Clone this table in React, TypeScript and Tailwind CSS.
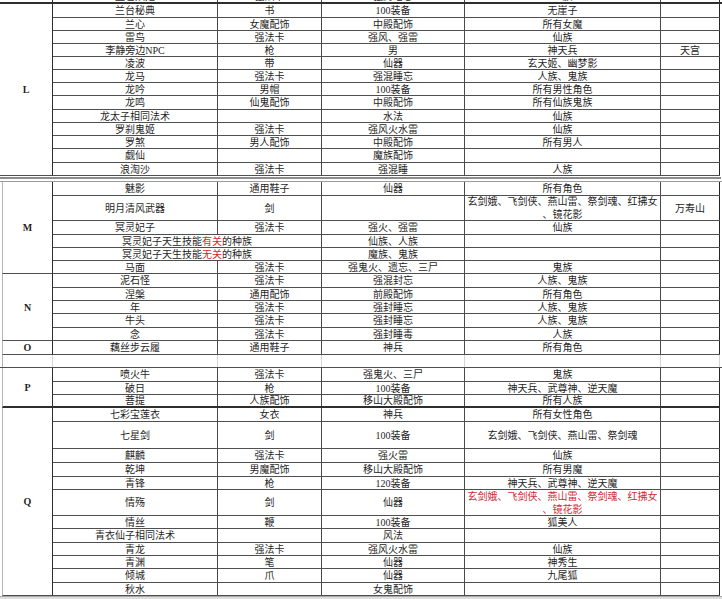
import React from 'react';

type Row = {
  h: number;
  c: React.ReactNode[];
  span?: boolean;
};

const HEIGHT: Record<number, string> = {
  12: 'h-[12px]',
  13: 'h-[13px]',
  14: 'h-[14px]',
  15: 'h-[15px]',
  25: 'h-[25px]',
  26: 'h-[26px]',
  27: 'h-[27px]',
};

const COLS = ['w-[165px]', 'w-[104px]', 'w-[143px]', 'w-[196px]', 'w-[59px]'];
const COLS_SPAN = ['w-[269px]', 'w-[143px]', 'w-[196px]', 'w-[59px]'];

const Red = ({ children }: { children: React.ReactNode }) => (
  <span className="text-[#d8262a]">{children}</span>
);

const TwoLines = ({ red }: { red?: boolean }) => (
  <span className={red ? 'text-[#d22a36]' : ''}>
    玄剑娥、飞剑侠、燕山雷、祭剑魂、红拂女
    <br />
    、镜花影
  </span>
);

const L_ROWS: Row[] = [
  { h: 14, c: ['兰台秘典', '书', '100装备', '无崖子', ''] },
  { h: 13, c: ['兰心', '女魔配饰', '中殿配饰', '所有女魔', ''] },
  { h: 13, c: ['雷鸟', '强法卡', '强风、强雷', '仙族', ''] },
  { h: 13, c: ['李静旁边NPC', '枪', '男', '神天兵', '天宫'] },
  { h: 13, c: ['凌波', '带', '仙器', '玄天姬、幽梦影', ''] },
  { h: 13, c: ['龙马', '强法卡', '强混睡忘', '人族、鬼族', ''] },
  { h: 13, c: ['龙吟', '男帽', '100装备', '所有男性角色', ''] },
  { h: 14, c: ['龙鸣', '仙鬼配饰', '中殿配饰', '所有仙族鬼族', ''] },
  { h: 13, c: ['龙太子相同法术', '', '水法', '仙族', ''] },
  { h: 13, c: ['罗刹鬼姬', '强法卡', '强风火水雷', '仙族', ''] },
  { h: 13, c: ['罗煞', '男人配饰', '中殿配饰', '所有男人', ''] },
  { h: 14, c: ['觑仙', '', '魔族配饰', '', ''] },
  { h: 13, c: ['浪淘沙', '强法卡', '强混睡', '人族', ''] },
];

const M_ROWS: Row[] = [
  { h: 14, c: ['魅影', '通用鞋子', '仙器', '所有角色', ''] },
  { h: 25, c: ['明月清风武器', '剑', '', <TwoLines key="a" />, '万寿山'] },
  { h: 14, c: ['冥灵妃子', '强法卡', '强火、强雷', '仙族', ''] },
  {
    h: 13,
    span: true,
    c: [
      <span key="b">
        冥灵妃子天生技能<Red>有关</Red>的种族
      </span>,
      '仙族、人族',
      '',
      '',
    ],
  },
  {
    h: 13,
    span: true,
    c: [
      <span key="c">
        冥灵妃子天生技能<Red>无关</Red>的种族
      </span>,
      '魔族、鬼族',
      '',
      '',
    ],
  },
  { h: 13, c: ['马面', '强法卡', '强鬼火、遗忘、三尸', '鬼族', ''] },
];

const N_ROWS: Row[] = [
  { h: 14, c: ['泥石怪', '强法卡', '强混封忘', '人族、鬼族', ''] },
  { h: 13, c: ['涅槃', '通用配饰', '前殿配饰', '所有角色', ''] },
  { h: 13, c: ['年', '强法卡', '强封睡忘', '人族、鬼族', ''] },
  { h: 14, c: ['牛头', '强法卡', '强封睡忘', '人族、鬼族', ''] },
  { h: 13, c: ['念', '强法卡', '强封睡毒', '人族', ''] },
];

const O_ROWS: Row[] = [{ h: 14, c: ['藕丝步云履', '通用鞋子', '神兵', '所有角色', ''] }];

const P_ROWS: Row[] = [
  { h: 14, c: ['喷火牛', '强法卡', '强鬼火、三尸', '鬼族', ''] },
  { h: 13, c: ['破日', '枪', '100装备', '神天兵、武尊神、逆天魔', ''] },
  { h: 13, c: ['菩提', '人族配饰', '移山大殿配饰', '所有人族', ''] },
];

const Q_ROWS: Row[] = [
  { h: 14, c: ['七彩宝莲衣', '女衣', '神兵', '所有女性角色', ''] },
  { h: 27, c: ['七星剑', '剑', '100装备', '玄剑娥、飞剑侠、燕山雷、祭剑魂', ''] },
  { h: 14, c: ['麒麟', '强法卡', '强火雷', '仙族', ''] },
  { h: 14, c: ['乾坤', '男魔配饰', '移山大殿配饰', '所有男魔', ''] },
  { h: 13, c: ['青锋', '枪', '120装备', '神天兵、武尊神、逆天魔', ''] },
  { h: 26, c: ['情殇', '剑', '仙器', <TwoLines key="d" red />, ''] },
  { h: 13, c: ['情丝', '鞭', '100装备', '狐美人', ''] },
  { h: 14, c: ['青衣仙子相同法术', '', '风法', '', ''] },
  { h: 13, c: ['青龙', '强法卡', '强风火水雷', '仙族', ''] },
  { h: 13, c: ['青渊', '笔', '仙器', '神秀生', ''] },
  { h: 14, c: ['倾城', '爪', '仙器', '九尾狐', ''] },
  { h: 13, c: ['秋水', '', '女鬼配饰', '', ''] },
];

function TableRow({ row, last, thick }: { row: Row; last?: boolean; thick?: boolean }) {
  const widths = row.span ? COLS_SPAN : COLS;
  const bottom = last && thick ? 'border-b-2 border-[#2e2e2e]' : 'border-b border-[#4f4f4f]';
  return (
    <div className={`flex ${HEIGHT[row.h]} ${bottom}`}>
      {row.c.map((cell, i) => (
        <div
          key={i}
          className={`${widths[i]} flex shrink-0 items-center justify-center whitespace-nowrap border-r text-center ${
            i === row.c.length - 1 ? 'border-[#262626]' : 'border-[#4a4a4a]'
          }`}
        >
          {cell}
        </div>
      ))}
    </div>
  );
}

function Section({
  letter,
  rows,
  edge,
  thick,
}: {
  letter: string;
  rows: Row[];
  edge?: boolean;
  thick?: boolean;
}) {
  return (
    <div className="flex">
      <div
        className={`flex shrink-0 items-center justify-center border-r border-r-[#2e2e2e] font-bold ${
          edge ? 'ml-[2px] w-[51px] border-l border-l-[#b4b4b4]' : 'w-[53px]'
        } ${thick ? 'border-b-2 border-b-[#2e2e2e]' : 'border-b border-b-[#4f4f4f]'}`}
      >
        {letter}
      </div>
      <div className="flex flex-col">
        {rows.map((r, i) => (
          <TableRow key={i} row={r} last={i === rows.length - 1} thick={thick} />
        ))}
      </div>
    </div>
  );
}

export default function App() {
  return (
    <div className="h-[599px] w-[722px] overflow-hidden bg-white font-['Liberation_Serif','Noto_Sans_CJK_SC',serif] text-[10px] leading-[13px] text-[#1f1f1f]">
      {/* clipped row above the visible part */}
      <div className="-mt-[10px] flex h-[14px] border-b-2 border-[#2e2e2e]">
        <div className="w-[53px] shrink-0 border-r border-[#2e2e2e]" />
        {['蓝色妖姬', '强法卡', '强封睡忘', '人族', ''].map((t, i) => (
          <div
            key={i}
            className={`${COLS[i]} flex shrink-0 items-center justify-center border-r ${
              i === 4 ? 'border-[#262626]' : 'border-[#4a4a4a]'
            }`}
          >
            {t}
          </div>
        ))}
      </div>

      <Section letter="L" rows={L_ROWS} />

      {/* double rule between L and M */}
      <div className="mt-[1px] h-[2px] w-[721px] bg-[#8c8c8c]" />
      <div className="h-[2px]" />

      <div className="border-t border-[#9a9a9a]">
        <Section letter="M" rows={M_ROWS} edge />
        <Section letter="N" rows={N_ROWS} edge />
        <Section letter="O" rows={O_ROWS} edge />

        {/* blank spacer row */}
        <div className="flex h-[13px] border-b border-[#4f4f4f]">
          <div className="ml-[2px] w-[51px] shrink-0 border-l border-r border-[#d4d4d4] border-l-[#b4b4b4]" />
          {COLS.map((w, i) => (
            <div key={i} className={`${w} shrink-0 border-r border-[#d4d4d4]`} />
          ))}
        </div>

        <Section letter="P" rows={P_ROWS} edge thick />
        <Section letter="Q" rows={Q_ROWS} edge />
      </div>

      <div className="h-[4px] border-t border-[#a8a8a8] bg-[#dedede]" />
    </div>
  );
}
